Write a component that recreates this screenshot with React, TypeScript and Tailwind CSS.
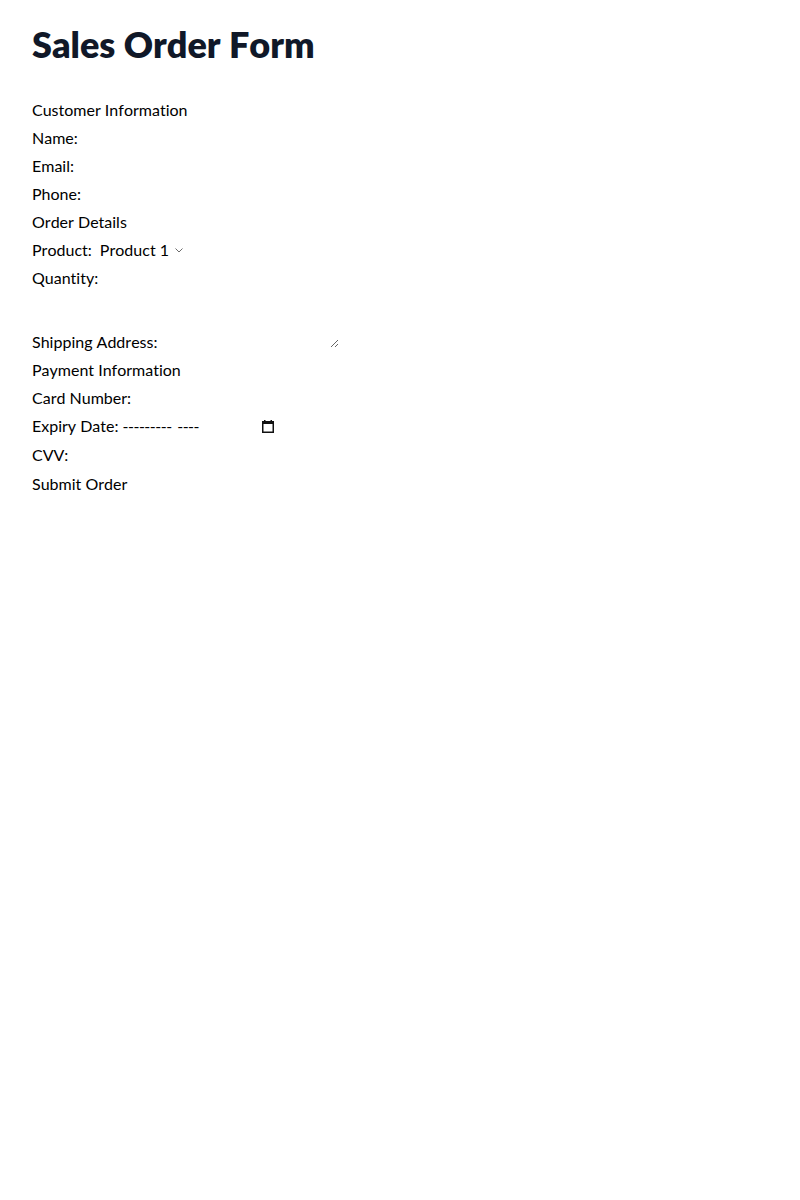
import React from "react";

function Chevron() {
  return (
    <svg
      className="pointer-events-none absolute right-0 top-[10px]"
      width="8"
      height="5"
      viewBox="0 0 8 5"
      fill="none"
      stroke="#6b6b6b"
      strokeWidth="1"
    >
      <path d="M0.5 0.5 L4 4 L7.5 0.5" />
    </svg>
  );
}

function CalendarIcon() {
  return (
    <svg width="14" height="14" viewBox="0 0 14 14" fill="none" className="shrink-0">
      <rect x="1.75" y="2.75" width="10.5" height="10.5" stroke="#111" strokeWidth="1.5" />
      <rect x="1" y="2" width="12" height="3" fill="#111" />
      <rect x="3" y="1" width="1.5" height="1.5" fill="#111" />
      <rect x="9.5" y="1" width="1.5" height="1.5" fill="#111" />
    </svg>
  );
}

export default function App() {
  return (
    <div
      className="min-h-[1200px] bg-white px-8 pt-6 text-black [font-kerning:none] [font-variant-ligatures:none]"
      style={{ fontFamily: "Lato, sans-serif" }}
    >
      <h1 className="mb-[34px] text-4xl font-extrabold text-gray-900">Sales Order Form</h1>
      <form className="flex flex-col gap-1">
        <div>Customer Information</div>
        <div>
          <label>Name: </label>
          <input type="text" />
        </div>
        <div>
          <label>Email: </label>
          <input type="email" />
        </div>
        <div>
          <label>Phone: </label>
          <input type="tel" />
        </div>
        <div>Order Details</div>
        <div>
          <label>Product: </label>
          <span className="relative inline-block">
            <select defaultValue="p1" className="appearance-none pl-1 pr-[13px]">
              <option value="p1">Product 1</option>
              <option value="p2">Product 2</option>
              <option value="p3">Product 3</option>
            </select>
            <Chevron />
          </span>
        </div>
        <div>
          <label>Quantity: </label>
          <input type="number" />
        </div>
        <div>
          <label>Shipping Address: </label>
          <textarea className="h-[54px] w-[177px] align-baseline" />
        </div>
        <div>Payment Information</div>
        <div>
          <label>Card Number: </label>
          <input type="text" />
        </div>
        <div className="h-[25px]">
          <label>Expiry Date: </label>
          <span className="inline-flex w-[155px] items-center">
            <input
              type="text"
              readOnly
              value="--------- ----"
              className="w-[138px] tracking-[-0.5px] [word-spacing:2px]"
            />
            <CalendarIcon />
          </span>
        </div>
        <div className="h-[25px]">
          <label>CVV: </label>
          <input type="text" />
        </div>
        <div>
          <button type="button">Submit Order</button>
        </div>
      </form>
    </div>
  );
}
